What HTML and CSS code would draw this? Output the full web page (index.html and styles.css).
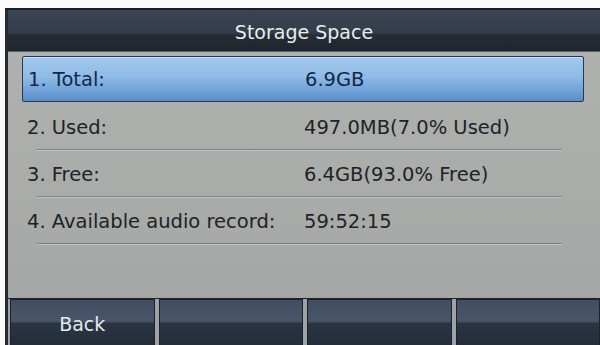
FILE: index.html
```html
<!DOCTYPE html>
<html lang="en">
<head>
    <meta charset="UTF-8">
    <title>Storage Space</title>
    <link rel="stylesheet" href="styles.css">
</head>
<body>
    <div class="screen">
        <div class="titlebar">Storage Space</div>

        <div class="list">
            <div class="row selected">
                <span class="label">1. Total:</span>
                <span class="value">6.9GB</span>
            </div>
            <div class="row">
                <span class="label">2. Used:</span>
                <span class="value">497.0MB(7.0% Used)</span>
            </div>
            <div class="row">
                <span class="label">3. Free:</span>
                <span class="value">6.4GB(93.0% Free)</span>
            </div>
            <div class="row">
                <span class="label">4. Available audio record:</span>
                <span class="value">59:52:15</span>
            </div>
        </div>

        <div class="softkeys">
            <div class="softkey">Back</div>
            <div class="softkey"></div>
            <div class="softkey"></div>
            <div class="softkey"></div>
        </div>
    </div>
</body>
</html>
```

FILE: styles.css
```css
body {
    margin: 0;
    padding: 8px 0 0 5px;
    background: #fbfbfb;
    font-family: 'DejaVu Sans', Tahoma, sans-serif;
    height: 345px;
    box-sizing: border-box;
    overflow: hidden;
}
.screen {
    height: 337px;
    display: flex;
    flex-direction: column;
    border-left: 3px solid #262a2e;
    border-top: 2px solid #1c2026;
    background: linear-gradient(to bottom, #b1b3b1 0%, #a9aba9 60%, #a2a5a5 100%);
}
.titlebar {
    height: 42px;
    flex: none;
    display: flex;
    align-items: center;
    justify-content: center;
    padding-top: 2px;
    box-sizing: border-box;
    color: #e9ecee;
    font-size: 19px;
    background: linear-gradient(to bottom, #3a4452 0%, #343d4a 55%, #262c35 62%, #20262e 100%);
    border-bottom: 1px solid #5d636b;
}
.list {
    flex: 1;
    padding: 4px 16px 0 14px;
}
.row {
    height: 47px;
    display: flex;
    align-items: center;
    position: relative;
    font-size: 19.5px;
    color: #202326;
}
.row::after {
    content: "";
    position: absolute;
    left: 15px;
    right: 22px;
    bottom: 0;
    border-top: 1px solid #7d8183;
    border-bottom: 1px solid #c2c4c3;
}
.row.selected {
    height: 44px;
    margin-bottom: 2px;
    border: 1px solid #26394f;
    border-radius: 2px;
    background: linear-gradient(to bottom, #a3c9ee 0%, #8fbbe7 45%, #6c9fd6 80%, #5a8cc6 100%);
    color: #10294a;
    box-shadow: inset 0 1px 0 #c4dcf4;
}
.row.selected::after {
    display: none;
}
.label {
    width: 277px;
    padding-left: 5px;
}
.value {
    flex: 1;
}
.softkeys {
    height: 48px;
    flex: none;
    display: flex;
    gap: 4px;
    padding-left: 2px;
    border-top: 1px solid #20252c;
    background: #9ea3a8;
}
.softkey {
    flex: 1;
    display: flex;
    align-items: center;
    justify-content: center;
    color: #e6eaee;
    font-size: 19px;
    border: 1px solid #1c222a;
    border-bottom: none;
    background: linear-gradient(to bottom, #414d60 0%, #495669 45%, #2b3443 50%, #242c39 100%);
}
```
